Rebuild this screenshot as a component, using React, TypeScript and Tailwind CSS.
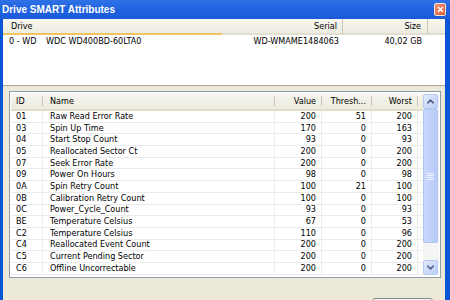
import { ChevronUp, ChevronDown } from 'lucide-react';

const rows: [string, string, number, number, number][] = [
  ['01', 'Raw Read Error Rate', 200, 51, 200],
  ['03', 'Spin Up Time', 170, 0, 163],
  ['04', 'Start Stop Count', 93, 0, 93],
  ['05', 'Reallocated Sector Ct', 200, 0, 200],
  ['07', 'Seek Error Rate', 200, 0, 200],
  ['09', 'Power On Hours', 98, 0, 98],
  ['0A', 'Spin Retry Count', 100, 21, 100],
  ['0B', 'Calibration Retry Count', 100, 0, 100],
  ['0C', 'Power_Cycle_Count', 93, 0, 93],
  ['BE', 'Temperature Celsius', 67, 0, 53],
  ['C2', 'Temperature Celsius', 110, 0, 96],
  ['C4', 'Reallocated Event Count', 200, 0, 200],
  ['C5', 'Current Pending Sector', 200, 0, 200],
  ['C6', 'Offline Uncorrectable', 200, 0, 200],
];

function ScrollButton({ up }: { up: boolean }) {
  return (
    <div className="h-[15px] w-[15px] rounded-[2px] border border-[#b6c9f4] bg-gradient-to-br from-[#e3ebfd] to-[#bccdf8] flex items-center justify-center">
      {up ? (
        <ChevronUp size={11} strokeWidth={3.2} className="text-[#4d6185]" />
      ) : (
        <ChevronDown size={11} strokeWidth={3.2} className="text-[#4d6185]" />
      )}
    </div>
  );
}

export default function App() {
  return (
    <div className="w-[450px] h-[300px] overflow-hidden flex flex-col bg-[#0a54d6] font-['DejaVu_Sans_Condensed','Liberation_Sans',sans-serif] text-[9px] text-black leading-none">
      {/* title bar */}
      <div className="h-[19px] shrink-0 flex items-center justify-between pl-[2px] pr-[4px] bg-gradient-to-b from-[#2f72e6] via-[#1f63e0] to-[#1a5bd8]">
        <span className="font-['Liberation_Sans',sans-serif] font-bold text-[10px] text-white">Drive SMART Attributes</span>
        <div className="w-[12px] h-[13px] rounded-[2px] border border-[#f4e4dc] bg-gradient-to-br from-[#ef9676] to-[#d85a33] flex items-center justify-center">
          <svg width="7" height="7" viewBox="0 0 7 7">
            <path d="M1 1L6 6M6 1L1 6" stroke="white" strokeWidth="1.6" />
          </svg>
        </div>
      </div>

      {/* window body */}
      <div className="flex-1 ml-[3px] mr-[5px] bg-[#ece9d8] flex flex-col">
        {/* drive list */}
        <div className="h-[67px] shrink-0 bg-white border-b border-[#aca899] flex flex-col">
          <div className="h-[16px] flex bg-gradient-to-b from-[#f8f7f2] to-[#ebeadb]">
            <div className="w-[219px] pl-[8px] flex items-center border-b-2 border-[#f0c462]">Drive</div>
            <div className="w-[121px] pr-[5px] flex items-center justify-end border-b-2 border-[#e2dfd0] border-r border-r-[#cbc7b8]">Serial</div>
            <div className="w-[85px] pr-[6px] flex items-center justify-end border-b-2 border-[#e2dfd0] border-r border-r-[#cbc7b8]">Size</div>
            <div className="flex-1 border-b-2 border-[#e2dfd0]" />
          </div>
          <div className="h-[13px] flex items-center">
            <div className="w-[43px] pl-[6px]">0 - WD</div>
            <div className="w-[176px]">WDC WD400BD-60LTA0</div>
            <div className="w-[121px] pr-[4px] text-right">WD-WMAME1484063</div>
            <div className="w-[85px] pr-[6px] text-right">40,02 GB</div>
          </div>
        </div>

        {/* attributes list */}
        <div className="mt-[5px] ml-[6px] mr-[4px] h-[187px] shrink-0 border border-[#8e9cad] bg-white p-[1px] flex">
          <div className="flex-1 flex flex-col">
            <div className="h-[18px] shrink-0 flex py-[3px] bg-gradient-to-b from-[#f8f7f2] to-[#ebeadb] border-b-2 border-[#e0dccc]">
              <div className="w-[32px] pl-[5px] flex items-center border-r border-[#cbc7b8]">ID</div>
              <div className="w-[232px] pl-[7px] flex items-center border-r border-[#cbc7b8]">Name</div>
              <div className="w-[47px] pr-[5px] flex items-center justify-end border-r border-[#cbc7b8]">Value</div>
              <div className="w-[50px] pr-[5px] flex items-center justify-end border-r border-[#cbc7b8]">Thresh...</div>
              <div className="w-[46px] pr-[5px] flex items-center justify-end border-r border-[#cbc7b8]">Worst</div>
              <div className="flex-1" />
            </div>
            {rows.map(([id, name, value, thresh, worst]) => (
              <div key={id + name} className="h-[11.7px] flex border-b border-[#ebebeb]">
                <div className="w-[32px] pl-[5px] flex items-center border-r border-[#ebebeb]">{id}</div>
                <div className="w-[232px] pl-[7px] flex items-center border-r border-[#ebebeb]">{name}</div>
                <div className="w-[47px] pr-[5px] flex items-center justify-end border-r border-[#ebebeb]">{value}</div>
                <div className="w-[50px] pr-[5px] flex items-center justify-end border-r border-[#ebebeb]">{thresh}</div>
                <div className="w-[46px] pr-[5px] flex items-center justify-end border-r border-[#ebebeb]">{worst}</div>
                <div className="flex-1" />
              </div>
            ))}
          </div>

          {/* scrollbar */}
          <div className="w-[16px] my-[1px] flex flex-col bg-[#f5f6f3]">
            <ScrollButton up />
            <div className="h-[134px] w-[15px] rounded-[2px] border border-[#b2c6f4] bg-gradient-to-r from-[#c9d8fc] to-[#b8cbf8] flex flex-col items-center justify-center gap-[1px]">
              <span className="w-[7px] h-px bg-[#eef3fe]" />
              <span className="w-[7px] h-px bg-[#eef3fe]" />
              <span className="w-[7px] h-px bg-[#eef3fe]" />
              <span className="w-[7px] h-px bg-[#eef3fe]" />
            </div>
            <div className="flex-1" />
            <ScrollButton up={false} />
          </div>
        </div>

        {/* bottom button */}
        <div className="flex justify-end mr-[12px] mt-[20px]">
          <div className="w-[61px] h-[20px] rounded-t-[3px] border border-[#8a8a8a] bg-[#f4f3ee]" />
        </div>
      </div>
    </div>
  );
}
